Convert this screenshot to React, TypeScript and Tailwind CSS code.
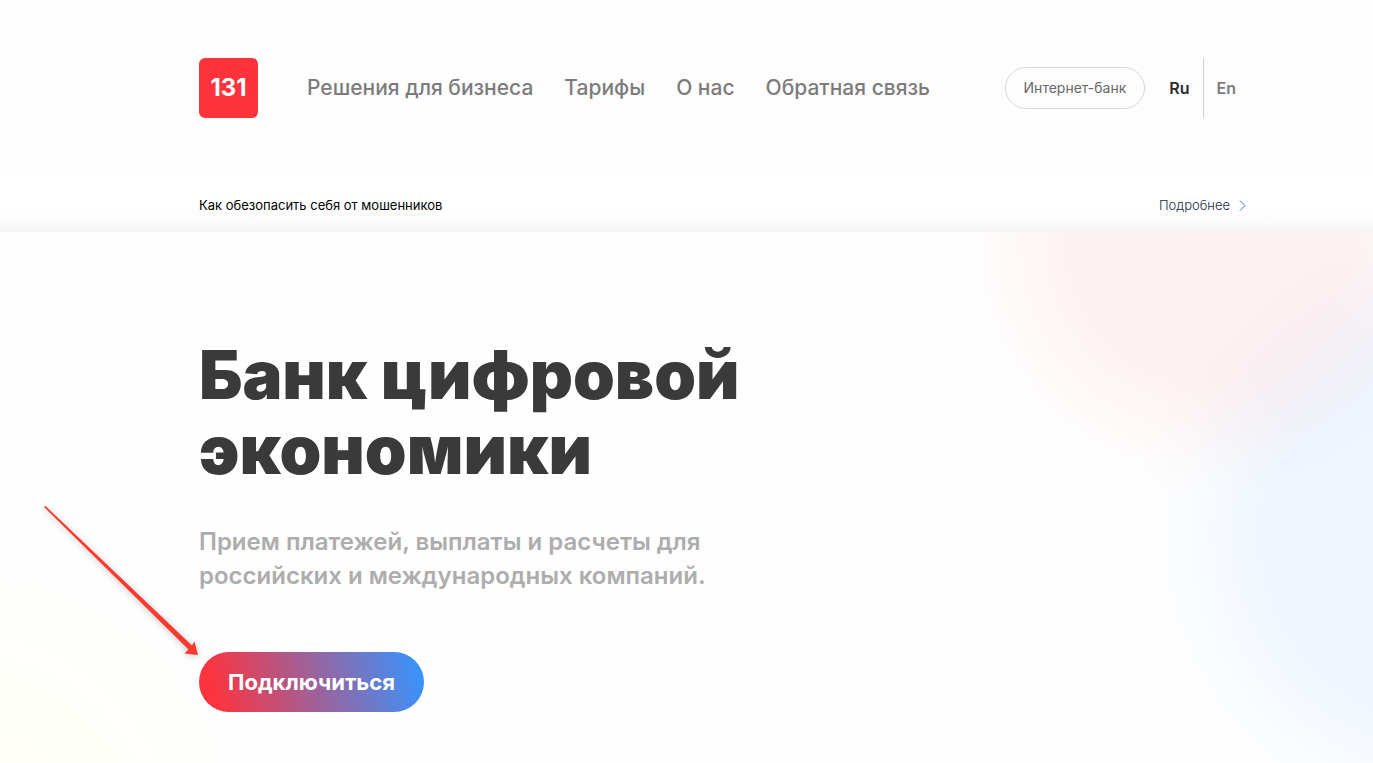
import React, { useState } from 'react';

const navLinks = [
  { label: 'Решения для бизнеса', href: '#business' },
  { label: 'Тарифы', href: '#tariffs' },
  { label: 'О нас', href: '#about' },
  { label: 'Обратная связь', href: '#feedback' },
];

type Lang = 'Ru' | 'En';

const Header: React.FC = () => {
  const [lang, setLang] = useState<Lang>('Ru');

  return (
    <header className="flex items-center bg-[#fdfdfd] py-[58px] pl-[199px] pr-[137px]">
      <a
        href="#home"
        className="flex h-[60px] w-[59px] shrink-0 items-center justify-center rounded-md bg-[#ff333b] text-2xl font-bold text-white"
      >
        131
      </a>
      <nav className="ml-[49px] flex gap-[31px] whitespace-nowrap text-[21px] font-medium text-[#7c7c7c]">
        {navLinks.map(link => (
          <a key={link.href} href={link.href} className="hover:text-[#3a3a3a]">
            {link.label}
          </a>
        ))}
      </nav>
      <div className="ml-auto flex items-center">
        <a
          href="#bank"
          className="flex h-[42px] items-center whitespace-nowrap rounded-full border border-[#d6d6d6] px-[18px] text-sm text-[#666]"
        >
          Интернет-банк
        </a>
        <div className="ml-6 flex h-[60px] items-center font-semibold">
          <button
            onClick={() => setLang('Ru')}
            className={`pr-[13px] ${lang === 'Ru' ? 'text-[#2c2c2e]' : 'text-[#7c7c7c]'}`}
          >
            Ru
          </button>
          <div className="h-full w-px bg-[#d2d2d2]" />
          <button
            onClick={() => setLang('En')}
            className={`pl-[13px] ${lang === 'En' ? 'text-[#2c2c2e]' : 'text-[#7c7c7c]'}`}
          >
            En
          </button>
        </div>
      </div>
    </header>
  );
};

const NoticeBar: React.FC = () => (
  <div className="flex h-14 items-center justify-between bg-[linear-gradient(#fff_50%,#fbfbfb_82%,#f3f3f3)] pl-[199px] pr-[127px] pt-[3px] text-[13px]">
    <span className="text-black">Как обезопасить себя от мошенников</span>
    <a href="#safety" className="flex items-center gap-[9px] font-light text-[#1d2a44]">
      Подробнее
      <svg width="7" height="11" viewBox="0 0 7 11" fill="none" stroke="#4b6fd8" strokeWidth="1">
        <path d="M1 .5 6 5.5 1 10.5" />
      </svg>
    </a>
  </div>
);

const Arrow: React.FC = () => (
  <svg
    className="pointer-events-none absolute left-10 top-[270px] drop-shadow-[0_1px_3px_rgba(0,0,0,0.25)]"
    width="162"
    height="160"
    viewBox="0 0 162 160"
    fill="#fb3a2f"
  >
    <path d="M4 5 5.5 4 152 143.500 154.500 139.500 158 153 144.500 151.500 148.500 147.500Z" />
  </svg>
);

const Hero: React.FC = () => (
  <section className="relative flex-1 overflow-hidden bg-[radial-gradient(circle_at_right_163px_top_10px,rgba(253,70,70,0.07)_0px,rgba(253,70,70,0.07)_130px,rgba(253,70,70,0.04)_185px,rgba(253,70,70,0.01)_225px,transparent_255px),radial-gradient(circle_at_right_-80px_top_300px,rgba(40,140,255,0.08)_0px,rgba(40,140,255,0.07)_180px,rgba(40,140,255,0.04)_235px,rgba(40,140,255,0.01)_280px,transparent_315px),radial-gradient(circle_at_-40px_620px,#fffff3_0px,#fffffa_180px,#fefefe_300px)] pb-[51px] pl-[199px] pr-[127px] pt-[105px]">
    <h1 className="text-[67px] font-black leading-[75px] text-[#3a3a3a]">
      Банк цифровой
      <br />
      экономики
    </h1>
    <p className="mt-[38px] text-2xl/[34px] font-semibold text-[#adadad]">
      Прием платежей, выплаты и расчеты для
      <br />
      российских и международных компаний.
    </p>
    <button className="mt-[59px] flex h-[60px] items-center rounded-full bg-[linear-gradient(75deg,#fc343e_8%,#3a92fb_96%)] px-[29px] text-[22px] font-bold text-white">
      Подключиться
    </button>
    <Arrow />
  </section>
);

const App: React.FC = () => (
  <div className="flex min-h-screen flex-col bg-white font-['Inter','Liberation_Sans',sans-serif]">
    <Header />
    <NoticeBar />
    <Hero />
  </div>
);

export default App;
